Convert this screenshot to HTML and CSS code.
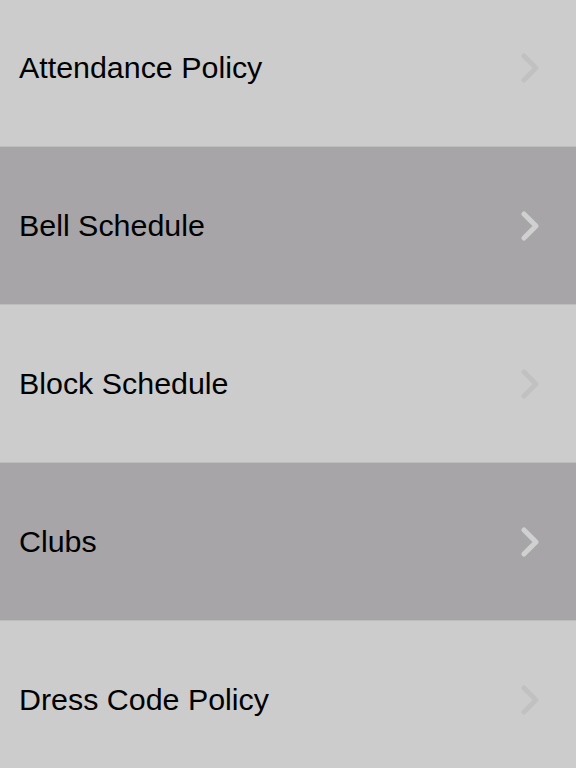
FILE: index.html
```html
<!DOCTYPE html>
<html lang="en">
<head>
    <meta charset="UTF-8">
    <meta name="viewport" content="width=device-width, initial-scale=1.0">
    <title>Student Handbook</title>
    <link rel="stylesheet" href="styles.css">
</head>
<body>
    <ul class="menu">
        <li class="row">
            <span class="label">Attendance Policy</span>
            <svg class="chevron" width="20" height="30" viewBox="0 0 20 30"><polyline points="4,3 16,15 4,27"/></svg>
        </li>
        <li class="row dark">
            <span class="label">Bell Schedule</span>
            <svg class="chevron" width="20" height="30" viewBox="0 0 20 30"><polyline points="4,3 16,15 4,27"/></svg>
        </li>
        <li class="row">
            <span class="label">Block Schedule</span>
            <svg class="chevron" width="20" height="30" viewBox="0 0 20 30"><polyline points="4,3 16,15 4,27"/></svg>
        </li>
        <li class="row dark">
            <span class="label">Clubs</span>
            <svg class="chevron" width="20" height="30" viewBox="0 0 20 30"><polyline points="4,3 16,15 4,27"/></svg>
        </li>
        <li class="row">
            <span class="label">Dress Code Policy</span>
            <svg class="chevron" width="20" height="30" viewBox="0 0 20 30"><polyline points="4,3 16,15 4,27"/></svg>
        </li>
    </ul>
</body>
</html>
```

FILE: styles.css
```css
body {
    margin: 0;
    padding: 0;
    font-family: "Liberation Sans", Arial, sans-serif;
    background-color: #cccccc;
    overflow: hidden;
}
.menu {
    list-style: none;
    margin: -11px 0 0 0;
    padding: 0;
}
.row {
    display: flex;
    align-items: center;
    justify-content: space-between;
    height: 157px;
    padding: 0 36px 0 19px;
    background-color: #cccccc;
    border-bottom: 1px solid #bdbdbd;
}
.row.dark { background-color: #a7a5a8; }
.label {
    font-size: 30.4px;
    color: #000;
}
.chevron polyline {
    fill: none;
    stroke: #c1c1c1;
    stroke-width: 5;
    stroke-linecap: round;
    stroke-linejoin: round;
}
.dark .chevron polyline { stroke: #d0d0d0; }
```
